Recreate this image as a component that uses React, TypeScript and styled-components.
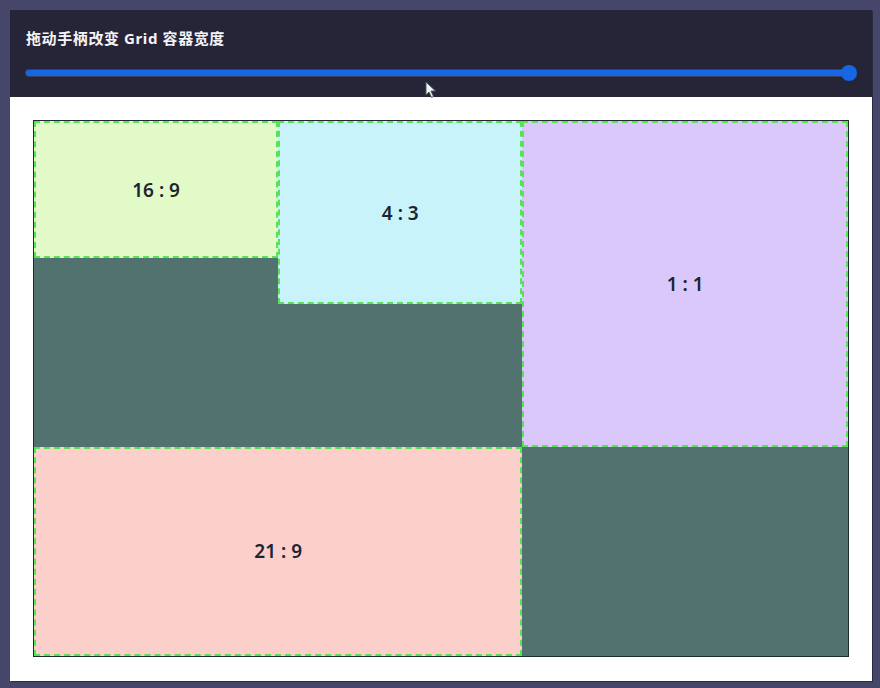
import React from 'react'
import styled, { createGlobalStyle } from 'styled-components'

const GlobalStyle = createGlobalStyle`
  html, body {
    margin: 0;
    padding: 0;
    background: #46466b;
    font-family: "Noto Sans", "Noto Sans CJK SC", sans-serif;
  }
`

const Page = styled.div`
  position: relative;
  width: 880px;
  height: 688px;
  padding: 10px 8px 7px 10px;
  box-sizing: border-box;
`

const Frame = styled.div`
  width: 862px;
  height: 671px;
  display: flex;
  flex-direction: column;
  box-shadow: 1px 1px 0 #2a2a40;
`

const Header = styled.div`
  height: 87px;
  box-sizing: border-box;
  background: #252537;
  padding: 17px 15px 0 16px;
  display: flex;
  flex-direction: column;
  gap: 16px;
`

const Title = styled.div`
  color: #f4f4f8;
  font-size: 15px;
  font-weight: 700;
  line-height: 22px;
  letter-spacing: 0.6px;
  font-family: "Noto Sans", "Noto Sans CJK SC", sans-serif;
`

const Slider = styled.div`
  position: relative;
  height: 16px;
  padding-right: 7px;
  display: flex;
  align-items: center;
`

const Track = styled.div`
  flex: 1;
  height: 6px;
  border-radius: 3px;
  background: #1766e4;
  box-shadow: 0 0 0 1px #3a3f5a;
`

const Thumb = styled.div`
  position: absolute;
  right: 0;
  top: 0;
  width: 16px;
  height: 16px;
  border-radius: 50%;
  background: #1766e4;
`

const Body = styled.div`
  flex: 1;
  background: #ffffff;
  padding: 23px 23px 0 23px;
`

const Grid = styled.div`
  display: grid;
  grid-template-columns: 3fr 3fr 4fr;
  align-items: start;
  background: #527270;
  border: 1px solid #1f2a2a;
`

const Cell = styled.div<{ $bg: string; $ratio: string; $span?: number }>`
  box-sizing: border-box;
  aspect-ratio: ${({ $ratio }) => $ratio};
  background: ${({ $bg }) => $bg};
  grid-column: span ${({ $span }) => $span || 1};
  border: 2px dashed #57e257;
  display: flex;
  align-items: center;
  justify-content: center;
  color: #1e2433;
  font-size: 19px;
  font-weight: 600;
  font-family: "Noto Sans", sans-serif;
`

const Cursor = styled.svg`
  position: absolute;
  left: 425px;
  top: 81px;
`

const cells = [
  { label: '16 : 9', ratio: '16 / 9', bg: '#e2f9c8' },
  { label: '4 : 3', ratio: '4 / 3', bg: '#c8f3fa' },
  { label: '1 : 1', ratio: '1 / 1', bg: '#dac8fa' },
  { label: '21 : 9', ratio: '21 / 9', bg: '#fbd0ca', span: 2 },
]

const App = () => {
  return (
    <Page>
      <GlobalStyle />
      <Frame>
        <Header>
          <Title>拖动手柄改变 Grid 容器宽度</Title>
          <Slider>
            <Track />
            <Thumb />
          </Slider>
        </Header>
        <Body>
          <Grid>
            {cells.map((c) => (
              <Cell key={c.label} $bg={c.bg} $ratio={c.ratio} $span={c.span}>
                {c.label}
              </Cell>
            ))}
          </Grid>
        </Body>
      </Frame>
      <Cursor width="12" height="18" viewBox="0 0 12 18">
        <path d="M1 1 L1 14 L4 11 L6.5 16.5 L8.5 15.5 L6 10 L10.5 10 Z" fill="#f2f4f4" stroke="#4a5a5a" strokeWidth="1" strokeLinejoin="round" />
      </Cursor>
    </Page>
  )
}

export default App
